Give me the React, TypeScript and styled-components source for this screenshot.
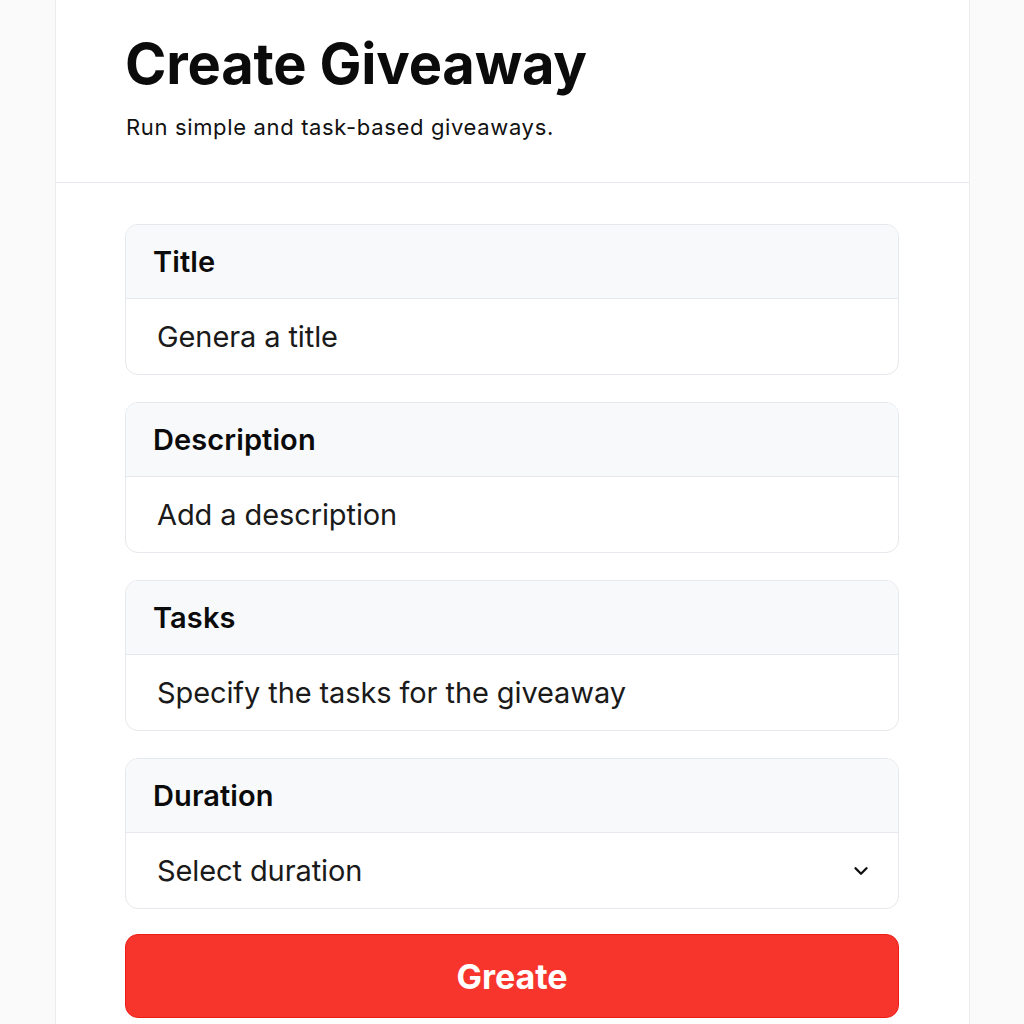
import React from "react";
import styled, { createGlobalStyle } from "styled-components";

const Global = createGlobalStyle`
  html, body { margin: 0; padding: 0; background: #fafafa; }
  body { font-family: Inter, "Noto Sans", sans-serif; color: #0b0b0c; }
  * { box-sizing: border-box; }
`;

const Page = styled.div`
  display: flex;
  justify-content: center;
  min-height: 1024px;
  padding-left: 1px;
`;

const Card = styled.div`
  width: 915px;
  background: #ffffff;
  border-left: 1px solid #ececee;
  border-right: 1px solid #ececee;
`;

const Header = styled.header`
  padding: 30px 69px 0 69px;
  height: 183px;
  border-bottom: 1px solid #e6e9ee;
`;

const Title = styled.h1`
  margin: 0;
  font-size: 56px;
  font-weight: 700;
  letter-spacing: -0.2px;
  line-height: 68px;
`;

const Subtitle = styled.p`
  margin: 16px 0 0 1px;
  font-size: 22px;
  line-height: 26px;
  font-weight: 400;
  letter-spacing: 0.65px;
  color: #111;
`;

const Body = styled.div`
  padding: 41px 70px 0 69px;
  display: flex;
  flex-direction: column;
  gap: 27px;
`;

const Field = styled.div`
  border: 1px solid #e5e8ec;
  border-radius: 13px;
  overflow: hidden;
  background: #fff;
`;

const FieldHead = styled.div`
  height: 74px;
  background: #f8f9fb;
  border-bottom: 1px solid #e5e8ec;
  display: flex;
  align-items: center;
  padding: 0 27px;
  font-size: 29px;
  font-weight: 600;
  letter-spacing: 0.1px;
`;

const FieldInput = styled.div`
  height: 75px;
  display: flex;
  align-items: center;
  justify-content: space-between;
  padding: 0 26px 0 31px;
  font-size: 29px;
  font-weight: 400;
  letter-spacing: -0.1px;
  color: #1a1a1a;
`;

const Chevron = styled.svg`
  width: 22px;
  height: 22px;
`;

const Button = styled.button`
  height: 84px;
  margin-top: -2px;
  border: 1px solid #ee1c16;
  border-radius: 13px;
  background: #f8352d;
  color: #fff;
  font-family: Inter, "Noto Sans", sans-serif;
  font-size: 34px;
  font-weight: 700;
  cursor: pointer;
`;

const fields = [
  { label: "Title", placeholder: "Genera a title" },
  { label: "Description", placeholder: "Add a description" },
  { label: "Tasks", placeholder: "Specify the tasks for the giveaway" },
  { label: "Duration", placeholder: "Select duration", select: true },
];

export default function App() {
  return (
    <>
      <Global />
      <Page>
        <Card>
          <Header>
            <Title>Create Giveaway</Title>
            <Subtitle>Run simple and task-based giveaways.</Subtitle>
          </Header>
          <Body>
            {fields.map((f) => (
              <Field key={f.label}>
                <FieldHead>{f.label}</FieldHead>
                <FieldInput>
                  <span>{f.placeholder}</span>
                  {f.select && (
                    <Chevron viewBox="0 0 24 24" fill="none" stroke="#111" strokeWidth="2.6" strokeLinecap="round" strokeLinejoin="round">
                      <path d="M6 9l6 6 6-6" />
                    </Chevron>
                  )}
                </FieldInput>
              </Field>
            ))}
            <Button>Greate</Button>
          </Body>
        </Card>
      </Page>
    </>
  );
}
